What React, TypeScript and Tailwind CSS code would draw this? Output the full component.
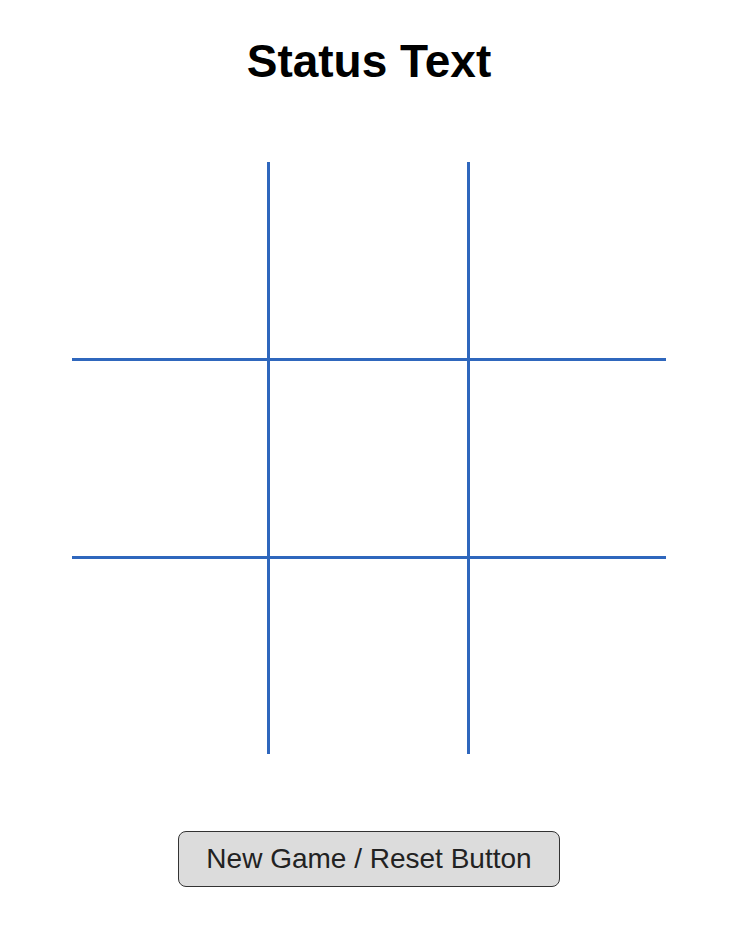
import React, { useState } from 'react';

type Cell = 'X' | 'O' | null;

export default function App() {
    const [board, setBoard] = useState<Cell[]>(Array(9).fill(null));

    // borders only between cells, like a drawn tic-tac-toe grid
    const cellClass = (i: number) => {
        const col = i % 3;
        const row = Math.floor(i / 3);
        const heights = ['h-[199px]', 'h-[198px]', 'h-[195px]'];
        return [
            'flex items-center justify-center text-6xl border-[#2f67bd]',
            col < 2 ? 'border-r-[3px]' : '',
            row < 2 ? 'border-b-[3px]' : '',
            heights[row],
        ].join(' ');
    };

    return (
        <div className="min-h-screen bg-white pr-[6px] flex flex-col items-center font-['Liberation_Sans',Arial,sans-serif]">
            {/* Status */}
            <h1 className="mt-[38px] text-[46px] leading-[46px] font-bold text-black">Status Text</h1>

            {/* Board */}
            <div className="mt-[78px] grid grid-cols-[198px_200px_196px]">
                {board.map((cell, i) => (
                    <div key={i} className={cellClass(i)}>
                        {cell}
                    </div>
                ))}
            </div>

            {/* Actions */}
            <button
                type="button"
                onClick={() => setBoard(Array(9).fill(null))}
                className="mt-[77px] w-[382px] h-[56px] rounded-[8px] border border-[#333] bg-[#dcdcdc] text-[28px] text-[#222]"
            >
                New Game / Reset Button
            </button>
        </div>
    );
}
